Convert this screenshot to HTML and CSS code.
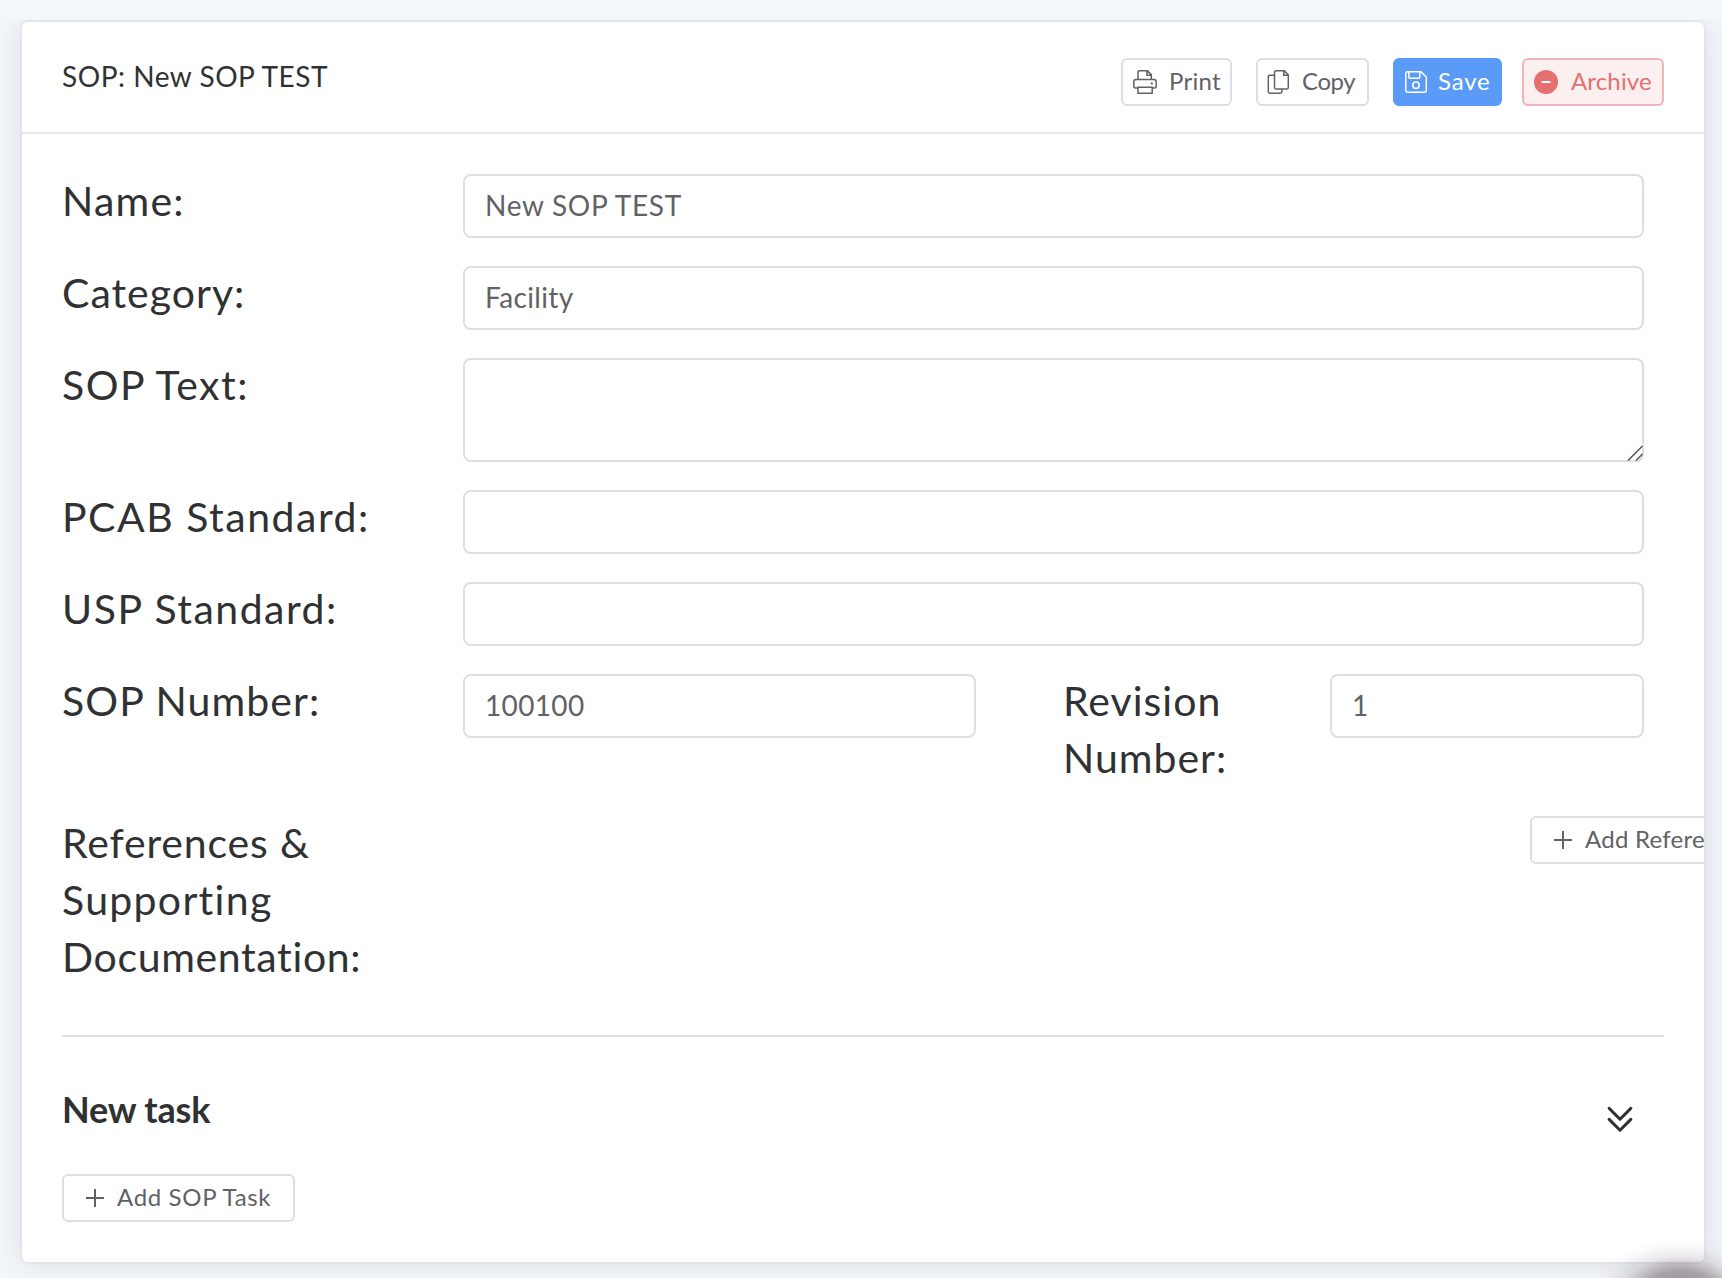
FILE: index.html
```
<!DOCTYPE html>
<html lang="en">
<head>
<meta charset="utf-8">
<title>SOP: New SOP TEST</title>
<link rel="stylesheet" href="styles.css">
</head>
<body>
<main class="page">
  <section class="card">
    <header class="card-header">
      <h1 class="title">SOP: New SOP TEST</h1>
      <div class="actions">
        <button class="btn btn-print">
          <svg class="icon" viewBox="0 0 24 24"><path d="M5 9.5V2Q5 .8 6.2.8H14.5L18.3 4.6V9.5M14 1V5.2H18.2M5 18H2.6Q.8 18 .8 16V12Q.8 9.6 3 9.6H21Q23.2 9.6 23.2 12V16Q23.2 18 21.4 18H19.2M5 17.2H19.2V23.2H5Z"/><circle class="dot" cx="18.8" cy="13.4" r="1.1"/></svg>
          <span>Print</span>
        </button>
        <button class="btn btn-copy">
          <svg class="icon" viewBox="0 0 24 24"><path d="M7 5.2H3Q1.3 5.2 1.3 6.9V21.5Q1.3 23.2 3 23.2H13.2Q14.9 23.2 14.9 21.5V19.2M9.2.8H17.3L21.3 4.8V17.4Q21.3 19.1 19.6 19.1H9.2Q7.5 19.1 7.5 17.4V2.5Q7.5.8 9.2.8ZM16.8 1V5.3H21.2"/></svg>
          <span>Copy</span>
        </button>
        <button class="btn btn-save">
          <svg class="icon" viewBox="0 0 24 24"><path d="M2.6 1.8H16L21.3 7V20.6Q21.3 22.2 19.7 22.2H2.4Q.8 22.2.8 20.6V3.4Q.8 1.8 2.6 1.8ZM3.8 2V7.2Q3.8 8.2 4.8 8.2H13.8Q14.8 8.2 14.8 7.2V2"/><circle cx="11" cy="15.2" r="3.2"/></svg>
          <span>Save</span>
        </button>
        <button class="btn btn-archive">
          <svg class="icon" viewBox="0 0 24 24"><circle class="disc" cx="12" cy="12" r="12"/><path class="bar" d="M8.4 12H15.6"/></svg>
          <span>Archive</span>
        </button>
      </div>
    </header>
    <div class="card-body">
      <div class="row">
        <label class="label name" for="name">Name:</label>
        <input class="field field-name" id="name" value="New SOP TEST">
      </div>
      <div class="row">
        <label class="label category" for="category">Category:</label>
        <input class="field" id="category" value="Facility">
      </div>
      <div class="row">
        <label class="label text" for="text">SOP Text:</label>
        <div class="area-wrap">
          <textarea class="field area" id="text"></textarea>
          <svg class="grip" viewBox="0 0 16 16"><path d="M1 15.5L15.5 1M9 15.5L15.5 9"/></svg>
        </div>
      </div>
      <div class="row">
        <label class="label standard" for="pcab">PCAB Standard:</label>
        <input class="field" id="pcab">
      </div>
      <div class="row">
        <label class="label standard" for="usp">USP Standard:</label>
        <input class="field" id="usp">
      </div>
      <div class="row row-numbers">
        <label class="label number" for="number">SOP Number:</label>
        <input class="field" id="number" value="100100">
        <label class="label revision" for="revision">Revision Number:</label>
        <input class="field" id="revision" value="1">
      </div>
      <div class="row row-references">
        <div class="label references">References &amp; <span class="supporting">Supporting</span> <span class="documentation">Documentation:</span></div>
        <button class="btn btn-add btn-reference">
          <svg class="icon" viewBox="0 0 24 24"><path class="plus" d="M3 12H21M12 3V21"/></svg>
          <span>Add Reference</span>
        </button>
      </div>
      <hr class="divider">
      <div class="task-head">
        <h2 class="task-title">New task</h2>
        <svg class="chevrons" viewBox="0 0 26 26"><path d="M2.2 2.4L13 13.2L23.8 2.4M2.2 13.4L13 24.2L23.8 13.4"/></svg>
      </div>
      <button class="btn btn-add btn-task">
        <svg class="icon" viewBox="0 0 24 24"><path class="plus" d="M3 12H21M12 3V21"/></svg>
        <span>Add SOP Task</span>
      </button>
    </div>
  </section>
  <div class="help-glow"></div>
</main>
</body>
</html>
```
FILE: styles.css
```
* { box-sizing: border-box; }
body {
  margin: 0;
  padding-top: 20px;
  height: 1278px;
  overflow: hidden;
  background: #f3f7fa;
  color: #303133;
  font-family: Lato, "Open Sans", sans-serif;
}
.page {
  position: relative;
  height: 1258px;
  padding: 2px 18px 16px 22px;
  overflow: hidden;
}
.card {
  height: 1240px;
  border-radius: 6px;
  overflow: hidden;
  background: #fff;
  box-shadow: 0 0 30px rgba(50, 40, 75, .14), 0 0 0 2px rgba(100, 90, 125, .04);
}
.card-header {
  display: flex;
  justify-content: space-between;
  height: 112px;
  padding: 36px 40px 0;
  border-bottom: 2px solid #e6e6ec;
}
.title {
  margin: 1px 0 0;
  font-size: 28px;
  font-weight: 400;
  line-height: 34px;
  letter-spacing: .52px;
}
.actions { display: flex; }
.btn {
  display: flex;
  align-items: center;
  height: 48px;
  padding: 0 0 0 10px;
  border: 2px solid #dddde5;
  border-radius: 6px;
  background: #fff;
  color: #606266;
  font: 24px/28px Lato, "Open Sans", sans-serif;
  white-space: nowrap;
}
.btn span { margin: -2px 0 0 12px; }
.icon {
  flex: none;
  width: 24px;
  height: 24px;
  fill: none;
  stroke: currentColor;
  stroke-width: 1.5;
}
.dot { fill: currentColor; stroke: none; }
.btn-print { width: 111px; margin-right: 24px; letter-spacing: .25px; }
.btn-copy { width: 113px; margin-right: 24px; padding-left: 9px; letter-spacing: -.4px; }
.btn-copy span { margin-left: 11px; }
.btn-save {
  width: 109px;
  margin-right: 20px;
  border-color: #5b9bf8;
  background: #5b9bf8;
  color: #fff;
  letter-spacing: .8px;
}
.btn-save span { margin-left: 9px; }
.btn-archive {
  width: 142px;
  border-color: #f2b5b5;
  background: #fcefef;
  color: #e4716f;
  letter-spacing: .15px;
}
.btn-archive span { margin-left: 13px; }
.disc { fill: currentColor; stroke: none; }
.bar { stroke: #fff; stroke-width: 2.2; stroke-linecap: round; }
.card-body { padding: 40px 40px 0; }
.row {
  display: grid;
  grid-template-columns: 401px 1181px;
  align-items: start;
  margin-bottom: 28px;
}
.label {
  margin-top: -2px;
  font-size: 41px;
  line-height: 57px;
}
.name { letter-spacing: 1.2px; }
.category { letter-spacing: 1px; }
.text { letter-spacing: 1.45px; }
.standard { letter-spacing: 1.5px; }
.number { letter-spacing: 1.1px; }
.revision { width: 200px; margin-left: -1px; letter-spacing: 1px; }
.references { width: 330px; letter-spacing: .83px; }
.supporting { letter-spacing: 1.3px; }
.documentation { letter-spacing: .64px; }
.field {
  display: block;
  width: 100%;
  height: 64px;
  padding: 0 20px 3px;
  border: 2px solid #dddde5;
  border-radius: 8px;
  outline: 0;
  background: #fff;
  color: #606266;
  font: 28px/34px Lato, "Open Sans", sans-serif;
  letter-spacing: .35px;
}
.field-name { letter-spacing: .7px; }
.area-wrap { position: relative; }
.area { height: 104px; resize: none; }
.grip {
  position: absolute;
  right: 1px;
  bottom: 1px;
  width: 16px;
  height: 16px;
  fill: none;
  stroke: #55565a;
  stroke-width: 1.5;
}
.row-numbers {
  grid-template-columns: 401px 513px 88px 266px 314px;
  margin-bottom: 30px;
}
.row-numbers .revision { grid-column: 4; }
.row-references {
  grid-template-columns: 1468px 230px;
  margin-bottom: 0;
}
.row-references .label { margin-top: -2px; }
.row-numbers + .row-references { padding-top: 0; }
.btn-add { padding-left: 19px; }
.btn-add span { margin-left: 10px; }
.btn-reference { width: 230px; letter-spacing: .25px; }
.plus { stroke-width: 2; }
.divider {
  height: 2px;
  margin: 50px 0 0;
  border: 0;
  background: #dddde5;
}
.task-head {
  display: flex;
  justify-content: space-between;
  height: 137px;
  padding: 50px 31px 0 0;
}
.task-title {
  margin: 0;
  font-size: 36px;
  line-height: 44px;
  letter-spacing: -.2px;
}
.chevrons {
  width: 26px;
  height: 26px;
  margin-top: 19px;
  fill: none;
  stroke: #303133;
  stroke-width: 3;
  stroke-linecap: round;
  stroke-linejoin: round;
}
.btn-task { width: 233px; letter-spacing: .65px; }
.help-glow {
  position: absolute;
  right: -54px;
  bottom: -88px;
  width: 190px;
  height: 130px;
  background: radial-gradient(closest-side, rgba(55, 25, 40, .5), rgba(55, 25, 40, .38) 45%, rgba(55, 25, 40, .1) 68%, rgba(55, 25, 40, .02) 86%, transparent);
}
```
